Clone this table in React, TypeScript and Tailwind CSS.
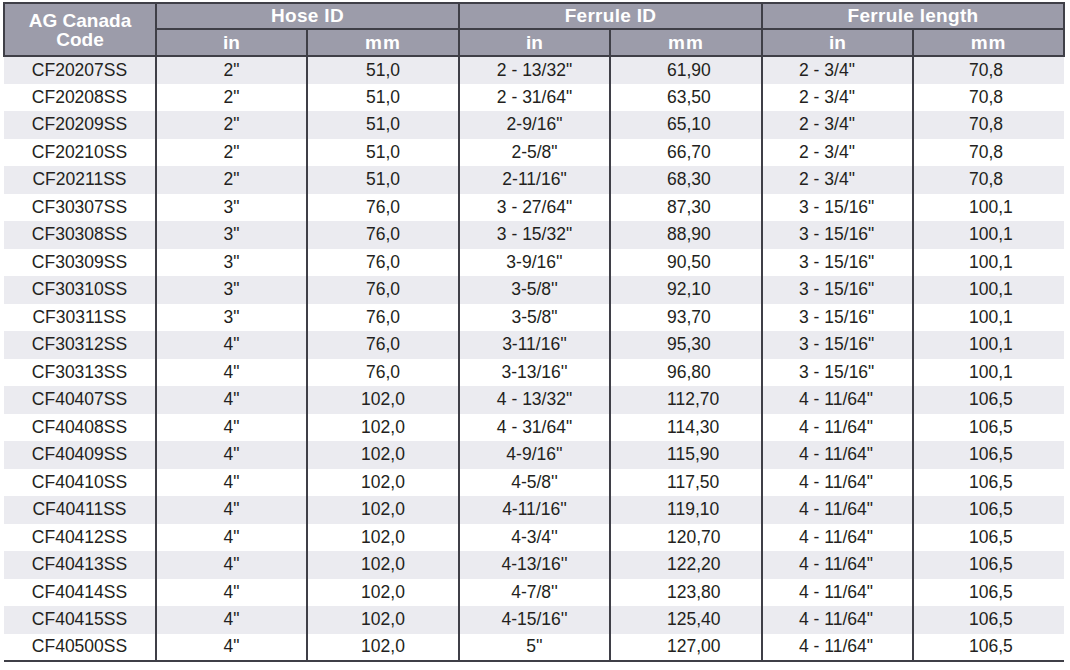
import React from "react";

type Row = [string, string, string, string, string, string, string];

const rows: Row[] = [
  ["CF20207SS", '2"', "51,0", '2 - 13/32"', "61,90", '2 - 3/4"', "70,8"],
  ["CF20208SS", '2"', "51,0", '2 - 31/64"', "63,50", '2 - 3/4"', "70,8"],
  ["CF20209SS", '2"', "51,0", '2-9/16"', "65,10", '2 - 3/4"', "70,8"],
  ["CF20210SS", '2"', "51,0", '2-5/8"', "66,70", '2 - 3/4"', "70,8"],
  ["CF20211SS", '2"', "51,0", '2-11/16"', "68,30", '2 - 3/4"', "70,8"],
  ["CF30307SS", '3"', "76,0", '3 - 27/64"', "87,30", '3 - 15/16"', "100,1"],
  ["CF30308SS", '3"', "76,0", '3 - 15/32"', "88,90", '3 - 15/16"', "100,1"],
  ["CF30309SS", '3"', "76,0", "3-9/16''", "90,50", '3 - 15/16"', "100,1"],
  ["CF30310SS", '3"', "76,0", "3-5/8''", "92,10", '3 - 15/16"', "100,1"],
  ["CF30311SS", '3"', "76,0", '3-5/8"', "93,70", '3 - 15/16"', "100,1"],
  ["CF30312SS", '4"', "76,0", "3-11/16''", "95,30", '3 - 15/16"', "100,1"],
  ["CF30313SS", '4"', "76,0", "3-13/16''", "96,80", '3 - 15/16"', "100,1"],
  ["CF40407SS", '4"', "102,0", '4 - 13/32"', "112,70", '4 - 11/64"', "106,5"],
  ["CF40408SS", '4"', "102,0", '4 - 31/64"', "114,30", '4 - 11/64"', "106,5"],
  ["CF40409SS", '4"', "102,0", "4-9/16''", "115,90", '4 - 11/64"', "106,5"],
  ["CF40410SS", '4"', "102,0", "4-5/8''", "117,50", '4 - 11/64"', "106,5"],
  ["CF40411SS", '4"', "102,0", "4-11/16''", "119,10", '4 - 11/64"', "106,5"],
  ["CF40412SS", '4"', "102,0", "4-3/4''", "120,70", '4 - 11/64"', "106,5"],
  ["CF40413SS", '4"', "102,0", "4-13/16''", "122,20", '4 - 11/64"', "106,5"],
  ["CF40414SS", '4"', "102,0", "4-7/8''", "123,80", '4 - 11/64"', "106,5"],
  ["CF40415SS", '4"', "102,0", "4-15/16''", "125,40", '4 - 11/64"', "106,5"],
  ["CF40500SS", '4"', "102,0", "5''", "127,00", '4 - 11/64"', "106,5"],
];

const cellAlign = [
  "text-center",
  "text-center",
  "text-center",
  "text-center",
  "text-left pl-[56px]",
  "text-left pl-[36px]",
  "text-left pl-[55px]",
];

const headCell = "border-2 border-[#3f3f47] bg-[#9c9caa] text-white font-bold text-[19px] leading-none";

export default function App() {
  return (
    <div className="w-[1070px] h-[670px] bg-white pt-[2px] pl-[3px] font-['Liberation_Sans',Arial,sans-serif]">
      <table className="w-[1060px] table-fixed border-collapse text-[#231f20]">
        <colgroup>
          <col className="w-[152px]" />
          <col className="w-[151px]" />
          <col className="w-[152px]" />
          <col className="w-[151px]" />
          <col className="w-[152px]" />
          <col className="w-[151px]" />
          <col className="w-[151px]" />
        </colgroup>
        <thead>
          <tr className="h-[26px]">
            <th rowSpan={2} className={`${headCell} leading-[24px]`}>
              AG Canada
              <br />
              Code
            </th>
            <th colSpan={2} className={`${headCell} tracking-[0.3px] pb-[2px]`}>Hose ID</th>
            <th colSpan={2} className={`${headCell} tracking-[0.3px] pb-[2px]`}>Ferrule ID</th>
            <th colSpan={2} className={`${headCell} tracking-[0.3px] pb-[2px]`}>Ferrule length</th>
          </tr>
          <tr className="h-[27px]">
            <th className={headCell}>in</th>
            <th className={`${headCell} tracking-[1px]`}>mm</th>
            <th className={headCell}>in</th>
            <th className={`${headCell} tracking-[1px]`}>mm</th>
            <th className={headCell}>in</th>
            <th className={`${headCell} tracking-[1px]`}>mm</th>
          </tr>
        </thead>
        <tbody className="border-b-2 border-[#3f3f47]">
          {rows.map((row, i) => (
            <tr key={row[0]} className={`h-[27.5px] ${i % 2 === 0 ? "bg-[#ebebf0]" : "bg-white"}`}>
              {row.map((value, j) => (
                <td
                  key={j}
                  className={`p-0 text-[17.5px] leading-none ${cellAlign[j]} ${
                    j < 6 ? "border-r-2 border-[#3f3f47]" : ""
                  }`}
                >
                  {value}
                </td>
              ))}
            </tr>
          ))}
        </tbody>
      </table>
    </div>
  );
}
